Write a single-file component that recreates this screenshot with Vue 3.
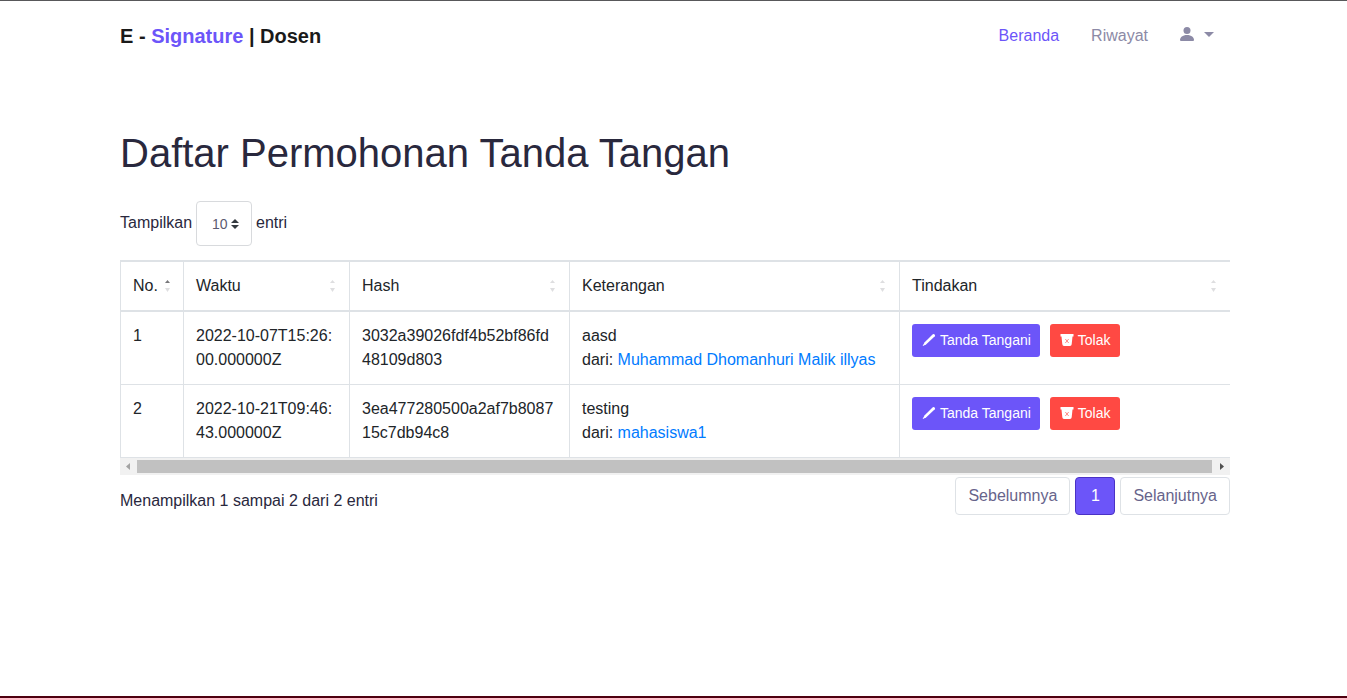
<script setup>
import { ref } from 'vue'

const pageSize = ref('10')
const columns = ['No.', 'Waktu', 'Hash', 'Keterangan', 'Tindakan']
const rows = [
  {
    no: 1,
    time: '2022-10-07T15:26:00.000000Z',
    hash: '3032a39026fdf4b52bf86fd48109d803',
    note: 'aasd',
    from: 'Muhammad Dhomanhuri Malik illyas',
  },
  {
    no: 2,
    time: '2022-10-21T09:46:43.000000Z',
    hash: '3ea477280500a2af7b808715c7db94c8',
    note: 'testing',
    from: 'mahasiswa1',
  },
]
</script>

<template>
  <div class="page">
    <header class="container navbar">
      <a class="brand" href="#">E - <span>Signature</span> | Dosen</a>
      <nav class="menu">
        <a class="active" href="#">Beranda</a>
        <a href="#">Riwayat</a>
        <button class="user" type="button" aria-label="Akun">
          <svg width="14" height="14" viewBox="0 0 14 14" fill="currentColor">
            <circle cx="7" cy="3.5" r="3.5" />
            <path d="M1 14q-1 0-1-1c0-2.500 2.500-5 7-5s7 2.500 7 5q0 1-1 1z" />
          </svg>
          <svg width="10" height="5" viewBox="0 0 10 5" fill="currentColor"><path d="M0 0h10L5 5z" /></svg>
        </button>
      </nav>
    </header>

    <main class="container content">
      <h1>Daftar Permohonan Tanda Tangan</h1>

      <div class="length">
        <label for="page-size">Tampilkan</label>
        <span class="select-box">
          <select id="page-size" v-model="pageSize">
            <option>10</option>
            <option>25</option>
            <option>50</option>
          </select>
          <svg width="8" height="10" viewBox="0 0 8 10" fill="#343a40"><path d="M0 4 4 0l4 4zM0 6h8l-4 4z" /></svg>
        </span>
        <span>entri</span>
      </div>

      <div class="table-wrap">
        <table>
          <colgroup>
            <col class="c-no" /><col class="c-time" /><col class="c-hash" /><col class="c-note" /><col />
          </colgroup>
          <thead>
            <tr>
              <th v-for="(name, i) in columns" :key="name" scope="col">
                <div class="head">
                  {{ name }}
                  <svg class="sort" :class="{ asc: i === 0 }" width="5" height="12" viewBox="0 0 5 12">
                    <path class="up" d="M0 3 2.500 0 5 3z" />
                    <path class="down" d="M0 8h5l-2.500 4z" />
                  </svg>
                </div>
              </th>
            </tr>
          </thead>
          <tbody>
            <tr v-for="row in rows" :key="row.no">
              <td>{{ row.no }}</td>
              <td class="break">{{ row.time }}</td>
              <td class="break">{{ row.hash }}</td>
              <td>{{ row.note }}<br />dari: <a href="#">{{ row.from }}</a></td>
              <td>
                <div class="actions">
                  <button class="btn sign" type="button">
                    <svg width="14" height="14" viewBox="0 0 14 14" fill="#fff">
                      <path d="M10.800 1.200q.7-.6 1.400 0l.6.6q.6.700 0 1.400L4.300 11.300 1 12.900q-.4 0-.2-.5L2.700 9.300z" />
                    </svg>
                    Tanda Tangani
                  </button>
                  <button class="btn reject" type="button">
                    <svg width="14" height="14" viewBox="0 0 14 14">
                      <path fill="#fff" d="M.5 1h13v2.500H.5zM1.500 3.500h11l-.8 7.800q-.2 1.700-1.700 1.700H4q-1.500 0-1.700-1.700z" />
                      <path d="m5.300 6 3.400 4m0-4-3.400 4" fill="none" stroke="#ff8a86" />
                    </svg>
                    Tolak
                  </button>
                </div>
              </td>
            </tr>
          </tbody>
        </table>
        <div class="scrollbar" aria-hidden="true">
          <svg width="17" height="17" viewBox="0 0 17 17" fill="#a3a3a3"><path d="M10 5v7L6 8.500z" /></svg>
          <div class="thumb"></div>
          <svg width="18" height="17" viewBox="0 0 18 17" fill="#505050"><path d="M8 5v7l4-3.500z" /></svg>
        </div>
      </div>

      <footer class="foot">
        <div class="info">Menampilkan 1 sampai 2 dari 2 entri</div>
        <div class="pager">
          <button type="button">Sebelumnya</button>
          <button class="current" type="button">1</button>
          <button type="button">Selanjutnya</button>
        </div>
      </footer>
    </main>
  </div>
</template>

<style>
body {
  margin: 0;
  background: #fff;
}
</style>

<style scoped>
.page {
  box-sizing: border-box;
  min-height: 100vh;
  padding: 0 15px 0 18px;
  border-top: 1px solid #58585a;
  border-bottom: 2px solid #4f000f;
  font: 16px/24px "Liberation Sans", Arial, sans-serif;
  color: #212529;
}
a {
  text-decoration: none;
}
button {
  font: inherit;
  cursor: pointer;
}
.container {
  max-width: 1110px;
  margin: 0 auto;
}
.navbar {
  display: flex;
  align-items: center;
  justify-content: space-between;
  height: 70px;
}
.brand {
  font-size: 20px;
  font-weight: bold;
  color: #1a1a1a;
}
.brand span,
.menu .active {
  color: #6c55f9;
}
.menu {
  display: flex;
  align-items: center;
  gap: 32px;
  padding-right: 16px;
}
.menu a,
.user {
  color: #8c8aa6;
}
.user {
  display: flex;
  align-items: center;
  gap: 10px;
  padding: 0 0 4px;
  border: 0;
  background: none;
}
.content {
  padding-top: 58px;
}
h1 {
  margin: 0 0 24px;
  font-size: 40px;
  font-weight: normal;
  line-height: 48px;
  color: #29283d;
}
.length {
  display: flex;
  align-items: center;
  gap: 4px;
  margin-bottom: 14px;
  color: #29283d;
}
.length > label,
.length > span:last-child {
  padding-bottom: 2px;
}
.select-box {
  position: relative;
  display: flex;
}
select {
  appearance: none;
  box-sizing: border-box;
  width: 56px;
  height: 45px;
  padding: 0 15px;
  border: 1px solid #d8dadd;
  border-radius: 4px;
  background: #fff;
  font: 14px "Liberation Sans", Arial, sans-serif;
  color: #5c5a70;
}
.select-box svg {
  position: absolute;
  top: 18px;
  right: 13px;
  pointer-events: none;
}
.table-wrap {
  overflow: hidden;
}
table {
  width: 100%;
  table-layout: fixed;
  border-collapse: separate;
  border-spacing: 0;
}
.c-no { width: 63px; }
.c-time { width: 166px; }
.c-hash { width: 220px; }
.c-note { width: 330px; }
th,
td {
  padding: 12px;
  border-left: 1px solid #dee2e6;
  border-bottom: 1px solid #dee2e6;
  text-align: left;
  vertical-align: top;
  font-weight: normal;
}
th {
  padding-right: 14px;
  border-top: 2px solid #dee2e6;
  border-bottom-width: 2px;
}
th:first-child {
  padding-right: 13px;
}
.head {
  display: flex;
  align-items: center;
  justify-content: space-between;
}
.sort {
  fill: #dedee0;
}
.sort.asc .up {
  fill: #77777a;
}
.break {
  word-break: break-all;
}
td a {
  color: #007bff;
}
.actions {
  display: flex;
  gap: 10px;
}
.btn {
  display: flex;
  align-items: center;
  gap: 4px;
  height: 33px;
  padding: 0 9px 2px 10px;
  border: 0;
  border-radius: 3px;
  color: #fff;
  font-size: 14px;
  white-space: nowrap;
}
.sign {
  background: #6c55f9;
}
.reject {
  background: #ff4943;
}
.scrollbar {
  display: flex;
  align-items: center;
  height: 17px;
  background: #f1f1f1;
}
.thumb {
  flex: 1;
  height: 13px;
  background: #c1c1c1;
}
.foot {
  display: flex;
  justify-content: space-between;
  align-items: flex-start;
  padding-top: 2px;
}
.info {
  padding-top: 12px;
  color: #29283d;
}
.pager {
  display: flex;
  gap: 5px;
}
.pager button {
  height: 38px;
  padding: 0 12px;
  border: 1px solid #dee2e6;
  border-radius: 4px;
  background: #fff;
  color: #67648b;
}
.pager .current {
  width: 40px;
  border-color: #4a32c4;
  background: #6c55f9;
  color: #fff;
}
</style>
